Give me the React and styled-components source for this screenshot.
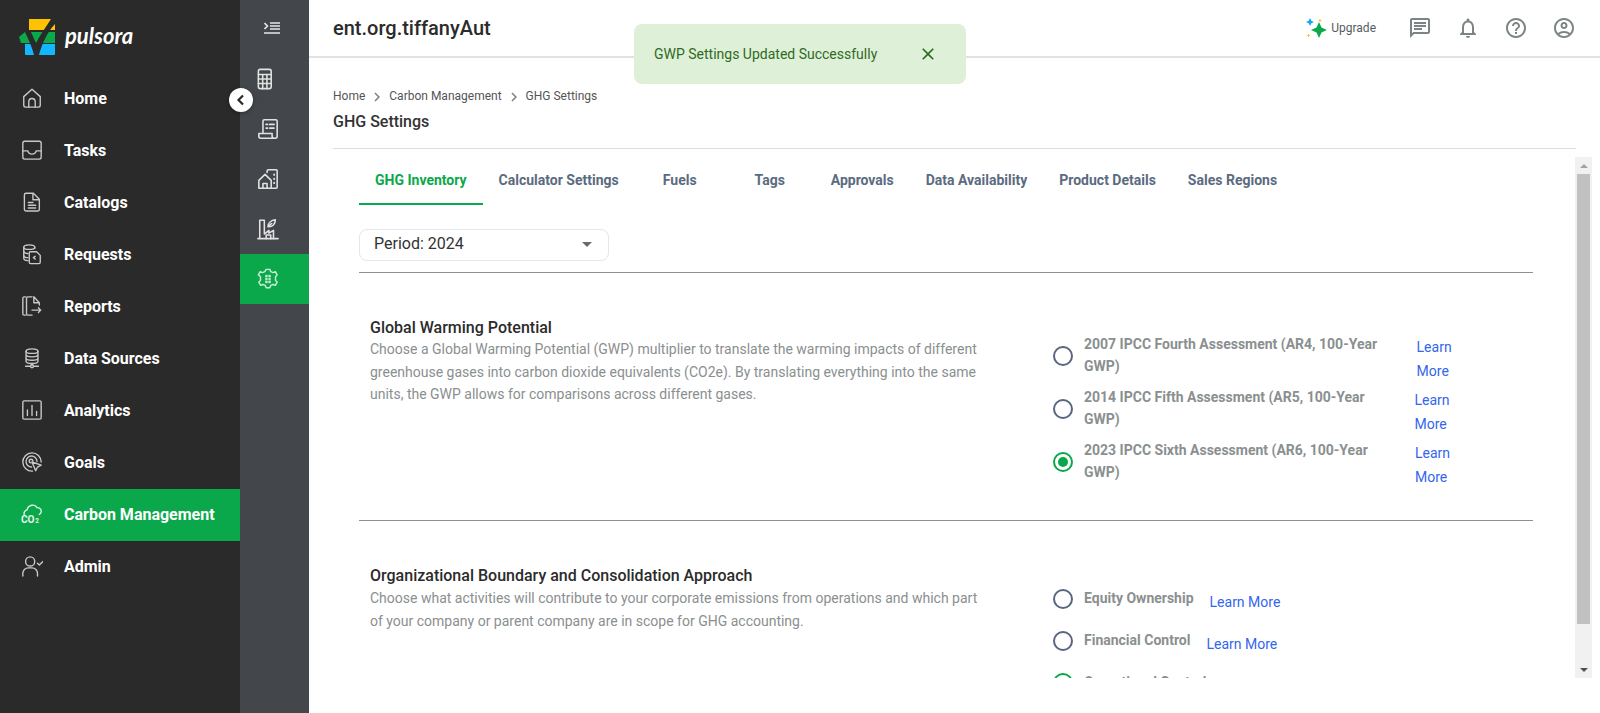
import styled, { createGlobalStyle } from 'styled-components';
import {
	MdClose,
	MdChevronRight,
	MdHelpOutline,
	MdOutlineAccountCircle,
	MdOutlineChat,
	MdOutlineNotifications,
} from 'react-icons/md';

const GlobalStyle = createGlobalStyle`
	html, body {
		margin: 0;
		padding: 0;
		background: #ffffff;
		font-family: Roboto, 'Liberation Sans', sans-serif;
	}
	* {
		box-sizing: border-box;
	}
`;

const Line = ({ size = 22, stroke = '#c9c9c9', width = 1.5, children }) => (
	<svg
		width={size}
		height={size}
		viewBox="0 0 24 24"
		fill="none"
		stroke={stroke}
		strokeWidth={width}
		strokeLinecap="round"
		strokeLinejoin="round"
	>
		{children}
	</svg>
);

const navIcons = {
	home: (
		<>
			<path d="M3 10.5 12 2.5l9 8V20a2 2 0 0 1-2 2H5a2 2 0 0 1-2-2z" />
			<path d="M8.5 22v-6a3.5 3.5 0 0 1 7 0v6" />
		</>
	),
	tasks: (
		<>
			<rect x="2" y="2.5" width="20" height="19.5" rx="2" />
			<path d="M2 13h5.5c.5 2.4 2 3.5 4.5 3.5s4-1.1 4.5-3.5H22" />
		</>
	),
	catalogs: (
		<>
			<path d="M5.5 2.5h8l6.5 6.5v11a1.8 1.8 0 0 1-1.8 1.8H5.5a1.8 1.8 0 0 1-1.8-1.8V4.3a1.8 1.8 0 0 1 1.8-1.8z" />
			<path d="M13 3v6.5h7M8 12.5h5M8 15.5h8M8 18.5h8" />
		</>
	),
	requests: (
		<>
			<path d="M15 6V4.5C15 3 12 2 9 2S3 3 3 4.5v12C3 18 5 19 7.5 19.2" />
			<path d="M3 4.5C3 6 6 7 9 7s6-1 6-2.5M3 9c0 1.3 2 2.3 4.5 2.5M3 13.5c0 1.3 2 2.3 4.5 2.5" />
			<path d="M10 9.5h7l4 4V21a1.5 1.5 0 0 1-1.5 1.5h-9A1.5 1.5 0 0 1 9 21V10.500a1 1 0 0 1 1-1z" />
			<path d="M15.500 14.500 13.500 16l2 1.500" />
		</>
	),
	reports: (
		<>
			<path d="M5 2H3.500A1.500 1.500 0 0 0 2 3.500v17A1.500 1.500 0 0 0 3.500 22H5" />
			<path d="M12 2H7.500A1.500 1.500 0 0 0 6 3.500v17A1.500 1.500 0 0 0 7.500 22H12M14 2l6 6.500V11M14 2v6.500h6" />
			<path d="M12 16.500h9.500M19 14l2.500 2.500L19 19" />
		</>
	),
	sources: (
		<>
			<ellipse cx="12" cy="4.500" rx="6.500" ry="2.500" />
			<path d="M5.500 4.500v11c0 1.400 2.900 2.500 6.500 2.500s6.500-1.100 6.500-2.500v-11M5.500 8.300c0 1.400 2.900 2.500 6.500 2.500s6.500-1.100 6.500-2.500M5.500 12c0 1.400 2.900 2.500 6.500 2.500s6.500-1.100 6.500-2.500" />
			<circle cx="12" cy="21" r="1.600" />
			<path d="M12 18v1.400M5 21h5.400M13.600 21H19" />
		</>
	),
	analytics: (
		<>
			<rect x="2" y="2" width="20" height="20" rx="1.500" />
			<path d="M7 12v6M12 7v11M17 13.500V18" />
		</>
	),
	goals: (
		<>
			<path d="M12.500 22a10 10 0 1 1 9.500-10" />
			<path d="M11.500 17.500a6 6 0 1 1 6-6" />
			<path d="M11 13a2 2 0 1 1 2-2" />
			<path d="m12 12 10 3.500-4 2-2 4z" />
		</>
	),
	admin: (
		<>
			<circle cx="10" cy="7" r="5" />
			<path d="M2 23v-3a6 6 0 0 1 6-6h4a6 6 0 0 1 6 6v3" />
			<path d="m18 9 2 2 4-4" />
		</>
	),
};

const CarbonIcon = () => (
	<svg width="24" height="24" viewBox="0 0 24 24" fill="none" stroke="#e4f5ea" strokeWidth="1.500" strokeLinecap="round">
		<path d="M3.500 12.500a4 4 0 0 1 3-5C8 2 15 .5 17.500 5c3 0 5 2 4.500 5-.2 1.200-1 2-2 2.500" />
		<text x="0" y="22" fontFamily="Roboto, sans-serif" fontWeight="700" fontSize="11" fill="#e4f5ea" stroke="none">
			CO
		</text>
		<text x="15.500" y="22" fontFamily="Roboto, sans-serif" fontWeight="700" fontSize="7" fill="#e4f5ea" stroke="none">
			2
		</text>
	</svg>
);

const railIcons = [
	<>
		<rect x="1.500" y="1.500" width="14" height="21" rx="2" />
		<path d="M1.500 7h14M1.500 12h14M1.500 17h14M6.200 7v15.500M10.800 7v15.500" />
	</>,
	<>
		<path d="M6.500 17V3.500A1.500 1.500 0 0 1 8 2h12.500A1.500 1.500 0 0 1 22 3.500V20a2 2 0 0 1-2 2H4a2 2 0 0 1-2-2v-3h14.500v3a2 2 0 0 0 2 2" />
		<path d="M10 7h1.500M14 7h4.500M10 11h1.500M14 11h4.500" strokeWidth="2" />
	</>,
	<>
		<path d="M2 13.500 8.800 7l6.700 6.500V22H2zM6.500 22v-5h4.500v5" />
		<path d="M11 5V3.500A1.500 1.500 0 0 1 12.500 2H21a1 1 0 0 1 1 1v18a1 1 0 0 1-1 1h-5" />
		<path d="M18.700 7v.5M18.700 11.500v.5M18.700 16v.5" strokeWidth="2" />
	</>,
	<>
		<path d="M1 22.500h22M3 22.500V2.500h5v15l5-4v3l5-3v9.500" />
		<path d="M10 22.500v-4h5v4" />
		<path d="M12 9.500c0-4 3.500-7 8-7.500 0 4.500-3 8-8 7.500zM12 9.500 16 6" />
	</>,
];

const ActiveRailIcon = () => (
	<svg width="22" height="22" viewBox="0 0 24 24" fill="none" stroke="#c8ecd6" strokeWidth="1.600" strokeLinejoin="round">
		<path d="M10 1.500h4l1 2.500 2.500 1 2.500-1 2 3.500-1.800 2v4l1.800 2-2 3.500-2.500-1-2.500 1-1 2.500h-4l-1-2.500-2.500-1-2.500 1-2-3.500 1.800-2v-4L1.500 7.500l2-3.500 2.500 1L8.500 4z" />
		<rect x="9" y="7.500" width="6" height="9" fill="#c8ecd6" stroke="none" />
		<path d="M9 10.500h6M9 13.500h6M12 7.500v9" stroke="#0aa84a" strokeWidth="0.800" />
	</svg>
);

const LogoMark = () => (
	<svg width="38" height="38" viewBox="0 0 38 38">
		<path d="M11 1h26v11H11z" fill="#fdc300" />
		<path d="M1 19l6-5h30v11H3z" fill="#0aaa4a" />
		<path d="M7 26h30v10a1 1 0 0 1-1 1H8a1 1 0 0 1-1-1z" fill="#12b8ff" />
		<path d="M6 12h6l6 13C22 17 28 9 33 1h4v5C29 14 24 26 21 37h-5C14 29 10 20 6 12z" fill="#2a2a2a" />
	</svg>
);

const Sparkle = () => (
	<svg width="21" height="21" viewBox="0 0 21 21">
		<path d="M13 4l2.500 5.500L21 12l-5.500 2.500L13 20l-2.500-5.500L5 12l5.500-2.500z" fill="#0aaa4a" />
		<path d="M4 0l1.300 2.700L8 4 5.300 5.300 4 8 2.700 5.300 0 4l2.700-1.300z" fill="#12a7f5" />
		<path d="M14 .5l.6 1.400L16 2.500l-1.400.6L14 4.500l-.6-1.400L12 2.500l1.400-.6z" fill="#f4c20d" />
		<path d="M2.500 15.500l.6 1.400 1.400.6-1.400.6-.6 1.400-.6-1.400-1.400-.6 1.400-.6z" fill="#f4c20d" />
	</svg>
);

const Page = styled.div`
	display: flex;
	height: 100vh;
	overflow: hidden;
`;

const Sidebar = styled.aside`
	position: relative;
	flex: 0 0 240px;
	background: #2a2a2a;
`;

const Logo = styled.div`
	display: flex;
	align-items: center;
	gap: 9px;
	height: 73px;
	padding: 0 0 0 18px;
`;

const LogoText = styled.span`
	margin-bottom: 2px;
	color: #ffffff;
	font-family: Lato, sans-serif;
	font-style: italic;
	font-weight: 700;
	font-size: 22px;
`;

const NavRow = styled.div`
	display: flex;
	align-items: center;
	gap: 21px;
	height: 52px;
	padding: 0 0 2px 21px;
	background: ${(p) => (p.$active ? '#0aa84a' : 'transparent')};
	color: #ffffff;
	font-size: 16px;
	font-weight: 700;
`;

const NavIcon = styled.span`
	display: flex;
	width: 22px;
`;

const CollapseButton = styled.button`
	position: absolute;
	top: 88px;
	left: 229px;
	display: flex;
	align-items: center;
	justify-content: center;
	width: 24px;
	height: 24px;
	padding: 0;
	border: 0;
	border-radius: 50%;
	background: #ffffff;
	box-shadow: 0 1px 4px rgba(0, 0, 0, 0.35);
	z-index: 2;
`;

const Rail = styled.nav`
	flex: 0 0 69px;
	background: #43474b;
`;

const RailToggle = styled.div`
	display: flex;
	align-items: center;
	justify-content: center;
	height: 54px;
	padding: 2px 5px 0 0;
`;

const RailItem = styled.div`
	display: flex;
	align-items: center;
	justify-content: center;
	height: 50px;
	padding-right: 13px;
	background: ${(p) => (p.$active ? '#0aa84a' : 'transparent')};
`;

const Main = styled.main`
	flex: 1;
	min-width: 0;
`;

const Topbar = styled.header`
	display: flex;
	align-items: center;
	justify-content: space-between;
	height: 58px;
	padding: 0 24px;
	border-bottom: 2px solid #e2e2e2;
`;

const OrgName = styled.h1`
	margin: 0;
	color: #2b2b2b;
	font-size: 20px;
	font-weight: 500;
`;

const TopActions = styled.div`
	display: flex;
	align-items: center;
	gap: 24px;
	color: #7c8583;
`;

const Upgrade = styled.span`
	display: flex;
	align-items: center;
	gap: 4px;
	margin-right: 8px;
	color: #555c60;
	font-size: 12px;
`;

const Toast = styled.div`
	position: fixed;
	top: 24px;
	left: 634px;
	display: flex;
	align-items: center;
	justify-content: space-between;
	width: 332px;
	height: 60px;
	padding: 0 28px 0 20px;
	border-radius: 8px;
	background: #dff0d8;
	color: #2f6b1f;
	font-size: 14px;
`;

const PageHead = styled.div`
	margin: 0 24px;
	padding-top: 29px;
	height: 91px;
	border-bottom: 1px solid #dedede;
`;

const Crumbs = styled.div`
	display: flex;
	align-items: center;
	height: 18px;
	color: #555555;
	font-size: 12px;
	svg {
		margin: 2px 3px 0;
		color: #808080;
	}
`;

const PageTitle = styled.h2`
	margin: 6px 0 0;
	color: #333333;
	font-size: 16px;
	font-weight: 500;
	line-height: 22px;
`;

const BodyRow = styled.div`
	display: flex;
	height: 521px;
	margin: 8px 8px 0 50px;
`;

const Content = styled.div`
	flex: 1;
	min-width: 0;
	padding-right: 42px;
	overflow: hidden;
`;

const ScrollTrack = styled.div`
	display: flex;
	flex-direction: column;
	flex: 0 0 17px;
	background: #f1f1f1;
	padding: 0 2px;
`;

const ScrollArrow = styled.div`
	flex: 0 0 17px;
	display: flex;
	align-items: center;
	justify-content: center;
	&::before {
		content: '';
		border-left: 4px solid transparent;
		border-right: 4px solid transparent;
		${(p) => (p.$up ? 'border-bottom: 4px solid #a3a3a3;' : 'border-top: 4px solid #505050;')}
	}
`;

const ScrollThumb = styled.div`
	height: 450px;
	background: #c1c1c1;
`;

const ScrollSpacer = styled.div`
	flex: 1;
`;

const Tabs = styled.div`
	display: flex;
	height: 48px;
`;

const Tab = styled.div`
	display: flex;
	align-items: center;
	justify-content: center;
	min-width: 90px;
	padding: 0 16px 0;
	color: ${(p) => (p.$active ? '#0aa84a' : '#5b6b7f')};
	border-bottom: 2px solid ${(p) => (p.$active ? '#0aa84a' : 'transparent')};
	font-size: 14px;
	font-weight: 700;
`;

const PeriodSelect = styled.div`
	display: flex;
	align-items: center;
	justify-content: space-between;
	width: 250px;
	height: 32px;
	margin-top: 24px;
	padding: 0 16px 4px 14px;
	border: 1px solid #e3e6ee;
	border-radius: 8px;
	color: #333333;
	font-size: 16px;
	&::after {
		content: '';
		margin-top: 3px;
		border-left: 5px solid transparent;
		border-right: 5px solid transparent;
		border-top: 5px solid #666b70;
	}
`;

const Section = styled.section`
	display: flex;
	margin-top: ${(p) => p.$gap}px;
	padding: ${(p) => p.$top}px 0 33px 11px;
	border-top: 1px solid #8f8f8f;
`;

const Intro = styled.div`
	flex: 0 0 683px;
	padding-right: 68px;
`;

const SectionTitle = styled.h3`
	margin: ${(p) => (p.$lift ? '-1px 0 1px' : '0')};
	color: #2b2b2b;
	font-size: 16px;
	font-weight: 500;
	line-height: 21px;
`;

const Description = styled.p`
	margin: 0;
	color: #8a8f8f;
	font-size: 14px;
	line-height: 22.5px;
`;

const Options = styled.div`
	flex: 0 0 431px;
	margin-top: 12px;
`;

const OptionRow = styled.div`
	display: flex;
	align-items: center;
	height: ${(p) => p.$height}px;
`;

const Radio = styled.span`
	flex: 0 0 20px;
	display: flex;
	align-items: center;
	justify-content: center;
	height: 20px;
	margin-right: 11px;
	border: 2px solid ${(p) => (p.$checked ? '#0aa84a' : '#5a6580')};
	border-radius: 50%;
	&::after {
		content: '';
		display: ${(p) => (p.$checked ? 'block' : 'none')};
		width: 10px;
		height: 10px;
		border-radius: 50%;
		background: #0aa84a;
	}
`;

const OptionLabel = styled.span`
	margin-bottom: 2px;
	color: #8a8f8f;
	font-size: 14px;
	font-weight: 700;
	line-height: 22px;
`;

const LearnMore = styled.a`
	margin: 6px 0 0 16px;
	color: #3366ee;
	font-size: 14px;
	line-height: 24px;
`;

const navItems = [
	{ key: 'home', label: 'Home' },
	{ key: 'tasks', label: 'Tasks' },
	{ key: 'catalogs', label: 'Catalogs' },
	{ key: 'requests', label: 'Requests' },
	{ key: 'reports', label: 'Reports' },
	{ key: 'sources', label: 'Data Sources' },
	{ key: 'analytics', label: 'Analytics' },
	{ key: 'goals', label: 'Goals' },
	{ key: 'carbon', label: 'Carbon Management', active: true },
	{ key: 'admin', label: 'Admin' },
];

const tabs = [
	'GHG Inventory',
	'Calculator Settings',
	'Fuels',
	'Tags',
	'Approvals',
	'Data Availability',
	'Product Details',
	'Sales Regions',
];

const gwpOptions = [
	{ label: '2007 IPCC Fourth Assessment (AR4, 100-Year GWP)' },
	{ label: '2014 IPCC Fifth Assessment (AR5, 100-Year GWP)' },
	{ label: '2023 IPCC Sixth Assessment (AR6, 100-Year GWP)', checked: true },
];

const boundaryOptions = [
	{ label: 'Equity Ownership' },
	{ label: 'Financial Control' },
	{ label: 'Operational Control', checked: true },
];

const OptionList = ({ items, height }) => (
	<Options>
		{items.map((item) => (
			<OptionRow key={item.label} $height={height}>
				<Radio $checked={item.checked} />
				<OptionLabel>{item.label}</OptionLabel>
				<LearnMore>Learn More</LearnMore>
			</OptionRow>
		))}
	</Options>
);

export default function App() {
	return (
		<Page>
			<GlobalStyle />
			<Sidebar>
				<Logo>
					<LogoMark />
					<LogoText>pulsora</LogoText>
				</Logo>
				{navItems.map((item) => (
					<NavRow key={item.key} $active={item.active}>
						<NavIcon>
							{item.key === 'carbon' ? <CarbonIcon /> : <Line>{navIcons[item.key]}</Line>}
						</NavIcon>
						{item.label}
					</NavRow>
				))}
				<CollapseButton aria-label="Collapse">
					<svg width="12" height="12" viewBox="0 0 12 12" fill="none" stroke="#2a2a2a" strokeWidth="2.200">
						<path d="M8 1.500 3.500 6 8 10.500" />
					</svg>
				</CollapseButton>
			</Sidebar>
			<Rail>
				<RailToggle>
					<svg width="16" height="12" viewBox="0 0 16 12" fill="none" stroke="#e6e6e6" strokeWidth="1.600">
						<path d="M0.500 1 3.500 4 0.500 7" />
						<path d="M6 1h10M6 4h10M6 7h10M0 11h16" strokeWidth="1.500" />
					</svg>
				</RailToggle>
				{railIcons.map((icon, i) => (
					<RailItem key={i}>
						<Line stroke="#e2e2e2" width={1.7}>{icon}</Line>
					</RailItem>
				))}
				<RailItem $active>
					<ActiveRailIcon />
				</RailItem>
			</Rail>
			<Main>
				<Topbar>
					<OrgName>ent.org.tiffanyAut</OrgName>
					<TopActions>
						<Upgrade>
							<Sparkle />
							Upgrade
						</Upgrade>
						<MdOutlineChat size={24} />
						<MdOutlineNotifications size={24} />
						<MdHelpOutline size={24} />
						<MdOutlineAccountCircle size={24} />
					</TopActions>
				</Topbar>
				<Toast>
					GWP Settings Updated Successfully
					<MdClose size={20} />
				</Toast>
				<PageHead>
					<Crumbs>
						Home
						<MdChevronRight size={18} />
						Carbon Management
						<MdChevronRight size={18} />
						GHG Settings
					</Crumbs>
					<PageTitle>GHG Settings</PageTitle>
				</PageHead>
				<BodyRow>
					<Content>
						<Tabs>
							{tabs.map((tab, i) => (
								<Tab key={tab} $active={i === 0}>
									{tab}
								</Tab>
							))}
						</Tabs>
						<PeriodSelect>Period: 2024</PeriodSelect>
						<Section $gap={11} $top={44}>
							<Intro>
								<SectionTitle>Global Warming Potential</SectionTitle>
								<Description>
									Choose a Global Warming Potential (GWP) multiplier to translate the warming impacts of
									different greenhouse gases into carbon dioxide equivalents (CO2e). By translating
									everything into the same units, the GWP allows for comparisons across different gases.
								</Description>
							</Intro>
							<OptionList items={gwpOptions} height={53} />
						</Section>
						<Section $gap={-1} $top={45}>
							<Intro>
								<SectionTitle $lift>Organizational Boundary and Consolidation Approach</SectionTitle>
								<Description>
									Choose what activities will contribute to your corporate emissions from operations and
									which part of your company or parent company are in scope for GHG accounting.
								</Description>
							</Intro>
							<OptionList items={boundaryOptions} height={42} />
						</Section>
					</Content>
					<ScrollTrack>
						<ScrollArrow $up />
						<ScrollThumb />
						<ScrollSpacer />
						<ScrollArrow />
					</ScrollTrack>
				</BodyRow>
			</Main>
		</Page>
	);
}
